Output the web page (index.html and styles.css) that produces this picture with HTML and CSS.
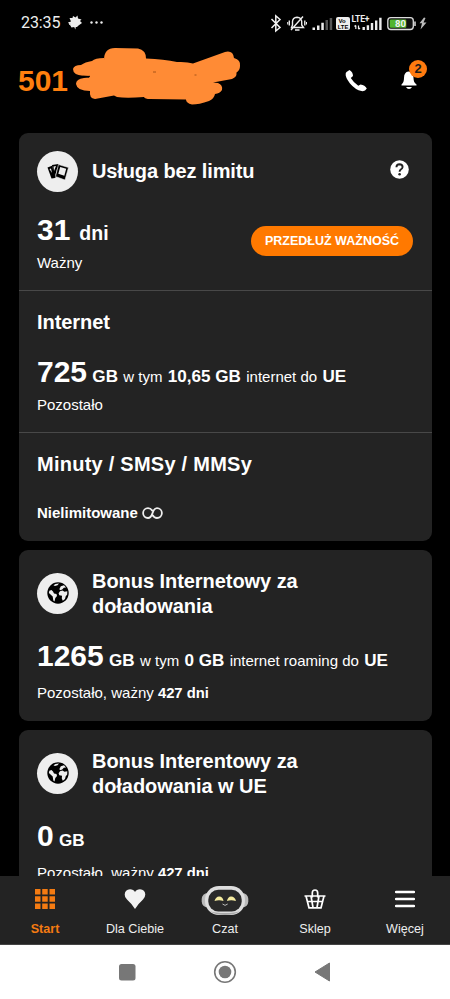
FILE: index.html
```html
<!DOCTYPE html>
<html lang="pl">
<head>
<meta charset="utf-8">
<title>Start</title>
<link rel="stylesheet" href="styles.css">
</head>
<body>
<svg width="0" height="0" class="defs">
  <symbol id="globe" viewBox="0 0 22 22">
    <circle cx="11" cy="11" r="10.700" fill="#000"/>
    <path d="M8.500 2 12 1.600 10.500 3.300 8 4 6.500 3.300ZM2.300 8.800 4.500 8 6 9.500 7 11.500 9.500 12 10 14 8.300 16 7.500 19.500 6.300 18.500 5.700 14.500 3 12 1.900 11ZM13.800 4.200 17 3.200 19 5.500 16.800 5.800 15.500 7.300 13.500 8.200 12.300 7.200ZM13 9.300 15.500 8.600 17.500 9.800 20.300 9.200 20.200 12.500 18.700 14.300 18 17 15.800 18.800 14.800 16.500 15 13.800 12.300 13.300 11.600 11.300Z" fill="#eee"/>
  </symbol>
</svg>

<div class="status">
  <span class="clock">23:35</span>
  <svg class="status-notes" width="38" height="16" viewBox="0 0 38 16">
    <path d="M1 7.500 4 6.500 2.500 3 5.500 3 6 1 8.500 2.500 10.500 .5 11 3.500 14.500 4.500 13 6 15 8 11.500 10.500 10 12 8.800 12 8.300 14.500 7.200 12 4.500 12.500 3 10Z" fill="#eee"/>
    <circle cx="3" cy="9" r="1" fill="#ddd"/>
    <g fill="#eee"><circle cx="24.500" cy="7.500" r="1.200"/><circle cx="29.500" cy="7.500" r="1.200"/><circle cx="34.500" cy="7.500" r="1.200"/></g>
  </svg>
  <svg class="status-icons" width="160" height="24" viewBox="268 10 160 24">
    <path d="M271.500 18 280 26.500 275.800 30V14.800L280 18.500 271.500 27" fill="none" stroke="#f2f2f2" stroke-width="1.500"/>
    <g fill="none" stroke="#eee" stroke-width="1.400">
      <path d="M291.500 26.500H303.500L301.700 24V20.500Q301.500 16.500 297 16.200 292.700 16.500 292.500 20.500V24ZM295 29H299.500M291 29 303 15.500M289.300 19.500V24.500M304.800 19.500V24.500"/>
      <path d="M287.700 21V23.500M306.500 21V23.500" stroke-width="1"/>
    </g>
    <g fill="#eee"><path d="M312.500 26.500h2.500v2.500h-2.500ZM317 24.500h2.500v4.500h-2.500ZM321.300 21.800h2.500v7.200h-2.500Z"/><path d="M325.500 19h2.500v10h-2.500ZM329.700 17h2.500v12h-2.500Z" fill="#555"/></g>
    <rect x="336" y="16" width="14" height="13" rx="2" fill="#eee"/>
    <g font-family="Liberation Sans" font-weight="bold" font-size="6" text-anchor="middle"><text x="342" y="21.800">Vo</text><text x="343" y="27.800" font-size="5.800">LTE</text></g>
    <text x="351.500" y="21.300" fill="#eee" font-family="Roboto" font-weight="700" font-size="8.500" textLength="18">LTE+</text>
    <path d="M355.800 24.500V28M354.500 25.500 355.800 24.300M358.500 24.500V28M360 27 358.500 28.300" stroke="#eee" stroke-width="1.200"/>
    <path d="M362.500 26h2.400v3h-2.400ZM366.700 24.300h2.400v4.700h-2.400ZM370.800 22h2.400v7h-2.400ZM375 19.500h2.400v9.500h-2.400ZM379.200 16.700h2.400v12.300h-2.400Z" fill="#eee"/>
    <rect x="387.800" y="16.700" width="25.500" height="11.800" rx="3" fill="#101010" stroke="#ddd" stroke-width="1.300"/>
    <rect x="389.800" y="18.500" width="16.500" height="8.200" rx="1" fill="#52b52e"/>
    <path d="M415 20.500V25" stroke="#ddd" stroke-width="1.500"/>
    <text x="400.500" y="26" fill="#f2f2f2" font-family="Roboto" font-weight="700" font-size="9.500" text-anchor="middle">80</text>
    <path d="M424 16.500 419.500 22.300H422L420.500 28.500 426.500 21.500H423.500L425.500 17Z" fill="#bbb"/>
  </svg>
</div>

<header class="top">
  <span class="msisdn">501</span>
  <svg class="scribble" width="170" height="60" viewBox="72 47 170 60">
    <path d="M104 60Q104 48 115 48L138 48.500Q146 50 146 58.500Q164 59 177 62Q187 61.500 193 63.500L225 52Q233 50 234 58Q241 60 240 66Q240 70 236.500 72.500Q237 77 232 79L213 82.500 218 83Q223 85 222 90 220 93.500 215 94Q214 99 209 101 199 104.500 192 104.500 186 103 186 99.500L150 99Q145 99 144 97 126 98.500 117 97L114 95.500 95 99Q89 98.500 90 91Q77 91 76 84 76 79 84 78L89 77.500 90 76 82 75.500 83 75.800Q73 75 73 69 74 65 81 65Q85 62 92 61 95 58 104 58Z" fill="#ff8b35"/>
    <path d="M84 76.500 90 75.700 89 77.500Z" fill="#000"/>
    <path d="M153 72h3M194.500 75h2" stroke="#a85418" stroke-width="1"/>
  </svg>
  <svg class="phone" width="24" height="24" viewBox="0 0 24 24"><path d="M2.500 3 5.500 1Q9 3 9 7L6.800 9Q9.500 13.500 14.300 16.800L16.500 15.500Q21 16 22.800 19.500Q21 22.700 17.500 22 11.500 21 6 14.500 1 8 1.700 4.500Q1.900 3.500 2.500 3Z" fill="#fff"/></svg>
  <div class="bell">
    <svg width="18" height="20" viewBox="0 0 18 20"><path d="M1.500 14.500Q4 12.500 4 8 4 2 8.500 1.500 13.500 2 13.500 8 13.500 12.500 16.500 14.500V15.500H1.500ZM6 17H12Q11 19 9 19 7 19 6 17Z" fill="#fff"/></svg>
    <span class="badge">2</span>
  </div>
</header>

<main class="cards">
  <article class="card">
    <section class="part first">
      <div class="head">
        <span class="disc"><svg width="22" height="18" viewBox="0 0 22 18">
          <path d="M.5 4.500 5 2.800 8 15 4.500 15.500Z" fill="#000"/><path d="M2.500 6 4 5.500 5 10Z" fill="#eee"/>
          <path d="M5 2 11.500 1 13 13 6.500 15Z" fill="#000"/><path d="M6.500 3.500 9 3 7 8ZM10.500 4 11 9 8 13.500Z" fill="#eee"/>
          <path d="M11.500 1.500 21.500 4.500 18 17 8.500 13.500Z" fill="#000" stroke="#eee" stroke-width=".6"/><path d="M13.200 4 19.200 5.800 17.300 12.700 11.300 10.800Z" fill="#eee"/>
        </svg></span>
        <h2 class="tight">Usługa bez limitu</h2>
        <svg class="help" width="19" height="19" viewBox="0 0 19 19"><circle cx="9.500" cy="9.500" r="9.300" fill="#fff"/><path d="M6.400 7.300Q6.500 4.400 9.500 4.300 12.500 4.400 12.600 7 12.500 8.500 10.800 9.500 9.600 10.300 9.600 11.800" fill="none" stroke="#222" stroke-width="1.900"/><circle cx="9.600" cy="14.300" r="1.300" fill="#222"/></svg>
      </div>
      <p class="amount">31 <b class="unit">dni</b></p>
      <p class="note">Ważny</p>
      <button class="extend">PRZEDŁUŻ WAŻNOŚĆ</button>
    </section>
    <section class="part">
      <h2>Internet</h2>
      <p class="amount"><strong>725</strong><b>GB</b><span>w tym</span><b>10,65 GB</b><span>internet do</span><b>UE</b></p>
      <p class="note">Pozostało</p>
    </section>
    <section class="part">
      <h2 class="wide">Minuty / SMSy / MMSy</h2>
      <p class="unlimited">Nielimitowane <svg width="21" height="13" viewBox="0 0 21 13"><path d="M10.500 4C9.300 2 7.800 1.200 6 1.200A4.900 4.900 0 0 0 6 11C8.500 11 9.500 9 10.500 6.100S12.800 1.200 15 1.200A4.900 4.900 0 0 1 15 11C13 11 11.700 10 10.500 8" fill="none" stroke="#eee" stroke-width="1.800"/></svg></p>
    </section>
  </article>

  <article class="card bonus">
    <div class="head">
      <span class="disc"><svg width="22" height="22"><use href="#globe"/></svg></span>
      <h2>Bonus Internetowy za<br>doładowania</h2>
    </div>
    <p class="amount"><strong>1265</strong><b>GB</b><span>w tym</span><b>0 GB</b><span>internet roaming do</span><b>UE</b></p>
    <p class="note">Pozostało, ważny <b>427 dni</b></p>
  </article>

  <article class="card bonus">
    <div class="head">
      <span class="disc"><svg width="22" height="22"><use href="#globe"/></svg></span>
      <h2>Bonus Interentowy za<br>doładowania w UE</h2>
    </div>
    <p class="amount"><strong>0</strong><b>GB</b></p>
    <p class="note">Pozostało, ważny <b>427 dni</b></p>
  </article>
</main>

<nav class="tabs">
  <a class="tab active"><svg width="20" height="20" viewBox="0 0 20 20"><path d="M0 0h5.500v5.500H0ZM7.200 0h5.500v5.500H7.200ZM14.500 0H20v5.500h-5.500ZM0 7.200h5.500v5.500H0ZM7.200 7.200h5.500v5.500H7.200ZM14.500 7.200H20v5.500h-5.500ZM0 14.500h5.500V20H0ZM7.200 14.500h5.500V20H7.200ZM14.500 14.500H20V20h-5.500Z" fill="#f47b12"/></svg>Start</a>
  <a class="tab"><svg width="22" height="20" viewBox="0 0 22 20"><path d="M11 20Q8.500 15.500 3 10.500 .5 8 .7 5.500 1 .5 6 .2 9.500 .2 11 3 12.500 .2 16 .2 21 .5 21.300 5.500 21.300 8 19 10.500 13.500 15.500 11 20Z" fill="#f2f2f2"/></svg>Dla Ciebie</a>
  <a class="tab"><svg class="bot" width="48" height="32" viewBox="0 0 48 32">
    <rect x=".7" y="8" width="46.600" height="14.500" rx="6" fill="#bbb"/><rect x="4" y="1" width="40" height="29" rx="14" fill="#dedede"/><path d="M9 26Q14 30 24 30T39 26Q34 28 24 28T9 26Z" fill="#aaa"/>
    <rect x="7.300" y="4.700" width="33.400" height="21.800" rx="10" fill="#292929"/>
    <path d="M13.500 16Q15 11.300 18.300 11.500 21.800 11.500 22.500 16 18 14.500 13.500 16ZM26 16Q27 11.300 30.200 11.500 33.800 11.500 35 16 30 14.500 26 16Z" fill="#f5eba0"/><path d="M21.500 19Q24 21.700 26.700 19" fill="none" stroke="#bbb"/>
  </svg>Czat</a>
  <a class="tab"><svg width="22" height="20" viewBox="0 0 22 20"><g fill="none" stroke="#fff" stroke-width="1.700"><path d="M.5 7H21.500M2 7 5 18.800H17L20 7M3.500 12.500H18.500M7 7 9 18.500M15 7 13 18.500M8.300 8.500V4Q8.300 1 11 1T13.700 4V8.500"/></g></svg>Sklep</a>
  <a class="tab"><svg width="20" height="18" viewBox="0 0 20 18"><path d="M1 2H19M1 9H19M1 16H19" stroke="#fff" stroke-width="2.300" stroke-linecap="round"/></svg>Więcej</a>
</nav>

<footer class="system">
  <svg width="24" height="24" viewBox="0 0 24 24"><rect x="4" y="4" width="16.500" height="16.500" rx="2.500" fill="#777"/></svg>
  <svg width="24" height="24" viewBox="0 0 24 24"><circle cx="12" cy="12" r="10.300" fill="none" stroke="#777" stroke-width="1.600"/><circle cx="12" cy="12" r="6.300" fill="#777"/></svg>
  <svg width="24" height="24" viewBox="0 0 24 24"><path d="M4 12 18.500 3V21Z" fill="#777" stroke="#777" stroke-linejoin="round"/></svg>
</footer>
</body>
</html>
```
FILE: styles.css
```css
* { box-sizing: border-box; }
body {
  margin: 0;
  width: 450px;
  height: 999px;
  overflow: hidden;
  display: flex;
  flex-direction: column;
  background: #000;
  color: #fff;
  font-family: "Liberation Sans", sans-serif;
}
svg { display: block; flex: none; }
.defs { position: absolute; }
h2, p { margin: 0; }

.status { height: 45px; display: flex; align-items: center; padding: 0 22px 0 21px; }
.clock { font: 400 16px/20px Roboto, sans-serif; letter-spacing: -.1px; color: #eee; width: 46px; }
.status-notes { margin-right: auto; }

.top { height: 88px; display: flex; align-items: center; padding: 0 26px 19px 18px; }
.msisdn { color: #ff7f0e; font-size: 30px; font-weight: bold; line-height: 36px; width: 54px; margin-top: 2px; }
.scribble { margin-bottom: 5px; margin-right: auto; }
.phone { margin-top: 2px; margin-right: 32px; }
.bell { position: relative; width: 24px; }
.badge {
  position: absolute;
  left: 9px;
  top: -10px;
  width: 18px;
  height: 18px;
  border-radius: 50%;
  background: #ff7a0f;
  color: #1b1b1b;
  font-size: 13px;
  font-weight: bold;
  line-height: 18px;
  text-align: center;
}

.cards { height: 743px; overflow: hidden; padding: 0 18.500px 0 18.500px; display: flex; flex-direction: column; gap: 9px; }
.card { flex: none; background: #232323; border-radius: 9px; }
.part { height: 142px; padding: 18px 18.500px; border-top: 1px solid #484848; position: relative; }
.part.first { height: 157px; border-top: 0; }
.part:last-child { height: 109px; }
.bonus { height: 171px; padding: 17.500px 18.500px; }
.head { display: flex; align-items: center; gap: 14px; }
.disc { width: 41px; height: 41px; border-radius: 50%; background: #eee; display: flex; align-items: center; justify-content: center; }
h2 { font-size: 20px; line-height: 25.500px; padding-top: .5px; letter-spacing: -.05px; }
.bonus h2 { padding-top: 1px; margin-bottom: -1px; }
.wide { letter-spacing: .25px; }
.tight { letter-spacing: -.12px; }
.help { margin: -5px 4px 0 auto; }

.amount { margin-top: 19.500px; height: 36px; font-size: 30px; font-weight: bold; line-height: 36px; display: flex; align-items: baseline; gap: 5.300px; }
.amount b { font-size: 17.100px; line-height: 20px; }
.amount span { font-size: 15px; font-weight: normal; line-height: 20px; }
.amount .unit { font-size: 19.500px; margin-left: 3.700px; }
.part:not(.first) .amount { margin-top: 18.500px; }
.note { font-size: 15px; line-height: 20px; margin-top: 5px; }
.bonus .note { margin-top: 9px; }
.note b { font-size: 14.800px; }
.extend {
  position: absolute;
  right: 18.500px;
  top: 92.500px;
  width: 162px;
  height: 30px;
  padding: 0;
  border: 0;
  border-radius: 15px;
  background: #ff7900;
  color: #fff;
  font: bold 12.500px/30px "Liberation Sans", sans-serif;
}
.unlimited { margin-top: 26px; font-size: 15px; font-weight: bold; line-height: 20px; display: flex; gap: 4px; align-items: center; }

.tabs { height: 69px; background: #232323; display: grid; grid-template-columns: repeat(5, 1fr); padding: 7px 0 0 0; border-bottom: 1px solid #444; }
.tab { display: grid; grid-template-rows: 32px 28px; place-items: center; font-size: 12.600px; color: #eee; }
.bot { margin-top: 3px; }
.active { color: #f47b12; font-weight: bold; }

.system { flex: 1; background: #fff; display: flex; justify-content: center; align-items: center; gap: 74px; padding-right: 1px; }
```
